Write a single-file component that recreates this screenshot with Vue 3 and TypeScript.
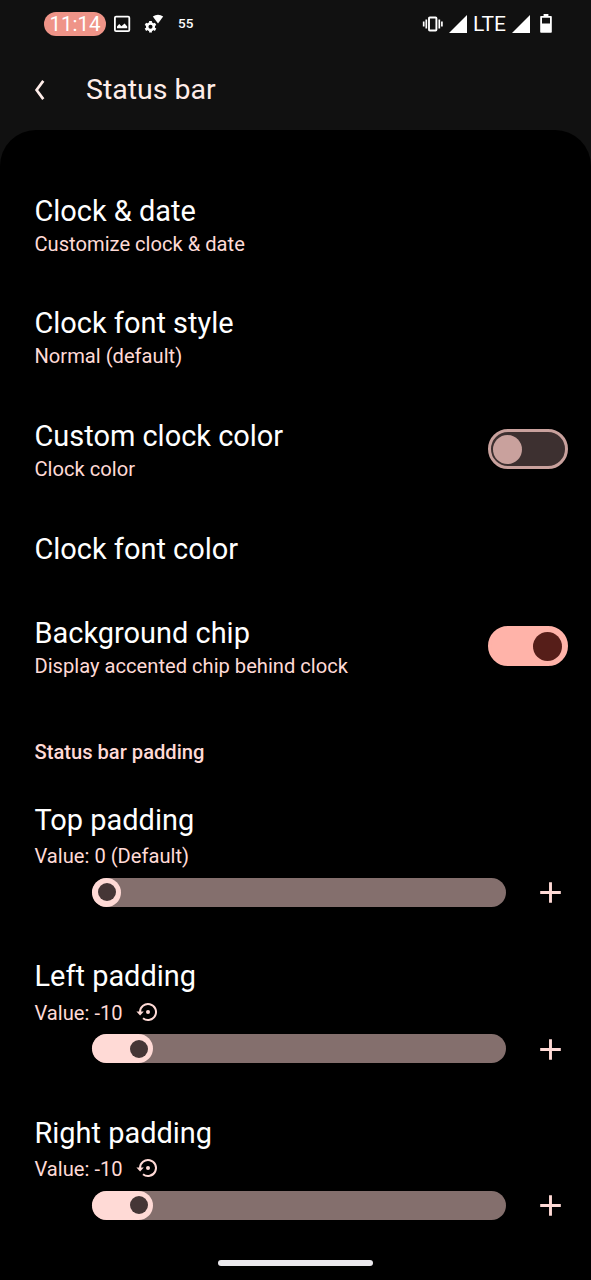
<script setup lang="ts">
import { reactive } from 'vue'

interface Item {
  title: string
  summary?: string
  on?: boolean
}

interface Slider {
  title: string
  value: string
  fill: number
  changed: boolean
}

const items = reactive<Item[]>([
  { title: 'Clock & date', summary: 'Customize clock & date' },
  { title: 'Clock font style', summary: 'Normal (default)' },
  { title: 'Custom clock color', summary: 'Clock color', on: false },
  { title: 'Clock font color' },
  { title: 'Background chip', summary: 'Display accented chip behind clock', on: true },
])

const sliders: Slider[] = [
  { title: 'Top padding', value: 'Value: 0 (Default)', fill: 29, changed: false },
  { title: 'Left padding', value: 'Value: -10', fill: 61, changed: true },
  { title: 'Right padding', value: 'Value: -10', fill: 61, changed: true },
]
</script>

<template>
  <div class="screen">
    <div class="statusbar">
      <span class="chip"><span class="time">11:14</span></span>
      <svg class="ic-image" width="18" height="18" viewBox="0 0 18 18">
        <rect x="1.9" y="1.6" width="14.4" height="14.6" rx="1.2" fill="none" stroke="#fff" stroke-width="1.8" />
        <path d="M4 13.2V11.4L6.2 9l2.200 2.300L11.600 8.400l2.600 3v1.800z" fill="#fff" />
      </svg>
      <svg class="ic-gear" width="20" height="20" viewBox="0 0 20 20">
        <circle cx="6.500" cy="12.800" r="3.300" fill="none" stroke="#fff" stroke-width="2.500" />
        <g stroke="#fff" stroke-width="2.800">
          <path d="M6.500 7v2M6.500 16.600v2M1.400 9.900l1.900 1.100M9.700 14.600l1.900 1.100M1.400 15.700l1.900-1.100M9.700 11l1.900-1.100" />
        </g>
        <path d="M8.800 2.600Q14-1.200 19.200 2.600L14 9.600z" fill="#fff" />
      </svg>
      <span class="speed">55</span>
      <span class="grow"></span>
      <svg class="ic-vibrate" width="22" height="18" viewBox="0 0 22 18">
        <rect x="7" y="2.500" width="7.400" height="13" rx=".8" fill="none" stroke="#fff" stroke-width="1.900" />
        <path d="M4.300 4.600v8.800M1.700 6.600v4.800M17.300 4.600v8.800M19.900 6.600v4.800" stroke="#fff" stroke-width="1.700" />
      </svg>
      <svg class="ic-signal" width="18" height="18" viewBox="0 0 18 18"><path d="M0 18H18V0z" fill="#fff" /></svg>
      <span class="lte">LTE</span>
      <svg class="ic-signal two" width="18" height="18" viewBox="0 0 18 18"><path d="M0 18H18V0z" fill="#fff" /></svg>
      <svg class="ic-battery" width="12" height="19" viewBox="0 0 12 19">
        <path d="M3.600 0h4.800v2H11a.8.8 0 0 1 .8.8V18a.8.8 0 0 1-.8.8H1a.8.8 0 0 1-.8-.8V2.800a.8.8 0 0 1 .8-.8h2.600zM2 3.800v5.600h8V3.800z" fill="#fff" fill-rule="evenodd" />
      </svg>
    </div>

    <header class="appbar">
      <svg class="back" width="12" height="22" viewBox="0 0 12 22">
        <path d="M9.300 1.900 2.600 11l6.700 9.100" fill="none" stroke="#ffede9" stroke-width="2.700" />
      </svg>
      <h1>Status bar</h1>
    </header>

    <main class="panel">
      <div v-for="item in items" :key="item.title" class="row">
        <div class="texts">
          <div class="title">{{ item.title }}</div>
          <div v-if="item.summary" class="summary">{{ item.summary }}</div>
        </div>
        <button
          v-if="item.on !== undefined"
          class="switch"
          :class="{ on: item.on }"
          role="switch"
          :aria-checked="item.on"
          @click="item.on = !item.on"
        >
          <span class="knob"></span>
        </button>
      </div>

      <h2>Status bar padding</h2>

      <div v-for="s in sliders" :key="s.title" class="slider-row">
        <div class="title">{{ s.title }}</div>
        <div class="value">
          <span class="summary">{{ s.value }}</span>
          <svg v-if="s.changed" class="reset" width="22" height="20" viewBox="0 0 22 20">
            <path d="M4 10a8 8 0 1 1 3 6.250" fill="none" stroke="#ffdad6" stroke-width="2" />
            <path d="M.4 9.500h7.400L4.100 13.600z" fill="#ffdad6" />
            <circle cx="12" cy="10" r="2" fill="#ffdad6" />
          </svg>
        </div>
        <div class="control">
          <div class="track">
            <div class="fill" :style="{ width: s.fill + 'px' }"><span class="thumb"></span></div>
          </div>
          <svg class="plus" width="22" height="22" viewBox="0 0 22 22">
            <path d="M10.500 1.200v20.600M.2 11.500h20.600" stroke="#ffdad6" stroke-width="2.900" />
          </svg>
        </div>
      </div>
    </main>
    <div class="home"></div>
  </div>
</template>

<style>
html,
body {
  background: #111;
  overflow: hidden;
}
</style>

<style scoped>
.screen {
  position: relative;
  width: 591px;
  height: 1280px;
  overflow: hidden;
  display: flex;
  flex-direction: column;
  background: #111;
  font-family: Roboto, 'Liberation Sans', sans-serif;
  color: #fff;
}
.statusbar {
  height: 47px;
  flex: none;
  display: flex;
  align-items: center;
  padding: 0 39px 0 44px;
}
.chip {
  width: 62px;
  height: 24px;
  border-radius: 12px;
  background: #ef9488;
  display: flex;
  align-items: center;
  justify-content: center;
}
.time {
  font-size: 20.500px;
  line-height: 24px;
  white-space: nowrap;
}
.ic-image {
  margin-left: 7px;
}
.ic-gear {
  margin-left: 13px;
}
.speed {
  margin-left: 14px;
  font-size: 13.500px;
  line-height: 16px;
  font-weight: 500;
  padding-bottom: 1px;
}
.grow {
  flex: 1;
}
.ic-signal {
  margin-left: 5px;
}
.lte {
  margin-left: 6px;
  font-size: 21px;
}
.two {
  margin-left: 6px;
}
.ic-battery {
  margin-left: 10px;
}
.appbar {
  height: 83px;
  flex: none;
  display: flex;
  align-items: center;
  padding: 2px 0 0 34px;
  box-sizing: border-box;
}
h1 {
  margin: 0 0 0 40px;
  font-size: 28.500px;
  line-height: 34px;
  font-weight: 400;
  color: #ffede9;
}
.panel {
  flex: 1;
  background: #000;
  border-radius: 36px 36px 0 0;
  padding: 38.500px 23px 0 34.500px;
}
.row {
  display: flex;
  align-items: center;
  justify-content: space-between;
  padding: 25.300px 0;
}
.title {
  font-size: 28.950px;
  line-height: 34px;
  white-space: nowrap;
}
.summary {
  font-size: 20.150px;
  line-height: 24px;
  color: #ffdad6;
  white-space: nowrap;
}
.texts .summary {
  margin-top: 4px;
}
.switch {
  width: 80px;
  height: 40px;
  margin: 0 0 1.500px;
  padding: 0 3px 0 2px;
  box-sizing: border-box;
  border: 3px solid #c9a19d;
  border-radius: 20px;
  background: #3d3030;
  display: flex;
  align-items: center;
}
.knob {
  width: 29px;
  height: 29px;
  border-radius: 50%;
  background: #c9a19d;
}
.switch.on {
  justify-content: flex-end;
  background: #ffb3a9;
  border-color: #ffb3a9;
}
.on .knob {
  background: #561e19;
}
h2 {
  margin: 37px 0 38.500px;
  font-size: 20.150px;
  line-height: 24px;
  font-weight: 500;
  color: #ffdad6;
}
.slider-row {
  margin-bottom: 52.500px;
}
.value {
  display: flex;
  align-items: center;
  gap: 13px;
  margin-top: 7.500px;
}
.reset {
  margin-top: -2px;
}
.control {
  display: flex;
  align-items: center;
  justify-content: space-between;
  margin-top: 9.500px;
  padding: 0 6px 0 57.500px;
  height: 29px;
}
.track {
  width: 414px;
  height: 29px;
  border-radius: 15px;
  background: #846f6d;
}
.fill {
  height: 29px;
  box-sizing: border-box;
  padding-right: 5.500px;
  border-radius: 15px;
  background: #ffdad6;
  display: flex;
  align-items: center;
  justify-content: flex-end;
}
.thumb {
  width: 18px;
  height: 18px;
  border-radius: 50%;
  background: #453636;
}
.home {
  position: absolute;
  left: 218px;
  bottom: 14px;
  width: 155px;
  height: 6px;
  border-radius: 3px;
  background: #ebe9ed;
}
</style>
